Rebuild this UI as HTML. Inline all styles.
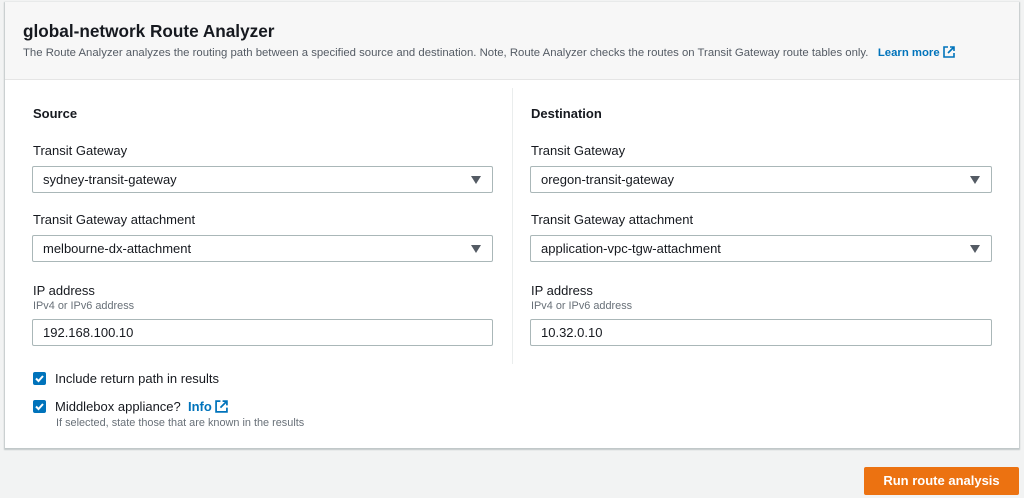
<!DOCTYPE html>
<html><head><style>
body{margin:0;width:1024px;height:498px;background:#f2f3f3;font-family:"Liberation Sans",sans-serif;color:#16191f;position:relative;overflow:hidden}
.card{position:absolute;left:5px;top:2px;width:1014px;height:446px;background:#fff;box-shadow:0 1px 1px 1px rgba(0,28,36,.2);}
.hdr{position:absolute;left:0;top:0;width:1014px;height:77px;background:#f7f7f7;border-bottom:1px solid #e5e5e5}
.a{position:absolute;white-space:nowrap}
.t{font-size:17.2px;font-weight:bold;left:18px;top:19px}
.d{font-size:11.35px;color:#545b64;left:18px;top:44px}
.lm{color:#0073bb;font-weight:bold}
h3{margin:0;font-size:13px;font-weight:bold;position:absolute}
.l{font-size:13px;position:absolute}
.h{font-size:10.9px;color:#687078;position:absolute;white-space:nowrap}
.in{position:absolute;height:25px;border:1px solid #aab7b8;border-radius:2px;font-size:13px;line-height:25px;padding-left:10px;box-sizing:content-box}
.tri{position:absolute;right:11px;top:9px;width:0;height:0;border-left:5px solid transparent;border-right:5px solid transparent;border-top:8px solid #545b64}
.div{position:absolute;left:507px;top:86px;width:1px;height:276px;background:#eaeded}
.cb{position:absolute;width:13px;height:13px;background:#0073bb;border-radius:2px}
.cb svg{position:absolute;left:0;top:0}
.btn{position:absolute;left:864px;top:467px;width:155px;height:28px;background:#ec7211;border-radius:2px;color:#fff;font-weight:bold;font-size:13px;text-align:center;line-height:28px}
</style></head><body>
<div class="card">
<div class="hdr">
<div class="a t">global-network Route Analyzer</div>
<div class="a d">The Route Analyzer analyzes the routing path between a specified source and destination. Note, Route Analyzer checks the routes on Transit Gateway route tables only. &nbsp;&nbsp;<span class="lm">Learn more</span> <svg width="12" height="12" viewBox="0 0 12 12" style="vertical-align:-2px"><path d="M5 1H1v10h10V7M7 1h4v4M11 1L5 7" fill="none" stroke="#0073bb" stroke-width="1.6"/></svg></div>
</div>
<h3 style="left:28px;top:104px">Source</h3>
<h3 style="left:526px;top:104px">Destination</h3>
<div class="l" style="left:28px;top:141px">Transit Gateway</div>
<div class="l" style="left:526px;top:141px">Transit Gateway</div>
<div class="in" style="left:27px;top:164px;width:449px">sydney-transit-gateway<div class="tri"></div></div>
<div class="in" style="left:525px;top:164px;width:450px">oregon-transit-gateway<div class="tri"></div></div>
<div class="l" style="left:28px;top:210px">Transit Gateway attachment</div>
<div class="l" style="left:526px;top:210px">Transit Gateway attachment</div>
<div class="in" style="left:27px;top:233px;width:449px">melbourne-dx-attachment<div class="tri"></div></div>
<div class="in" style="left:525px;top:233px;width:450px">application-vpc-tgw-attachment<div class="tri"></div></div>
<div class="l" style="left:28px;top:281px">IP address</div>
<div class="h" style="left:28px;top:298px">IPv4 or IPv6 address</div>
<div class="l" style="left:526px;top:281px">IP address</div>
<div class="h" style="left:526px;top:298px">IPv4 or IPv6 address</div>
<div class="in" style="left:27px;top:317px;width:449px">192.168.100.10</div>
<div class="in" style="left:525px;top:317px;width:450px">10.32.0.10</div>
<div class="div"></div>
<div class="cb" style="left:28px;top:370px"><svg width="13" height="13"><path d="M3 6.5l2.5 2.5 4.5-5" fill="none" stroke="#fff" stroke-width="2"/></svg></div>
<div class="l" style="left:50px;top:369px">Include return path in results</div>
<div class="cb" style="left:28px;top:398px"><svg width="13" height="13"><path d="M3 6.5l2.5 2.5 4.5-5" fill="none" stroke="#fff" stroke-width="2"/></svg></div>
<div class="l" style="left:50px;top:397px">Middlebox appliance? &nbsp;<span style="color:#0073bb;font-weight:bold">Info</span> <svg width="13" height="13" viewBox="0 0 12 12" style="vertical-align:-2px"><path d="M5 1H1v10h10V7M7 1h4v4M11 1L5 7" fill="none" stroke="#0073bb" stroke-width="1.6"/></svg></div>
<div class="h" style="left:51px;top:415px">If selected, state those that are known in the results</div>
</div>
<div class="btn">Run route analysis</div>
</body></html>
